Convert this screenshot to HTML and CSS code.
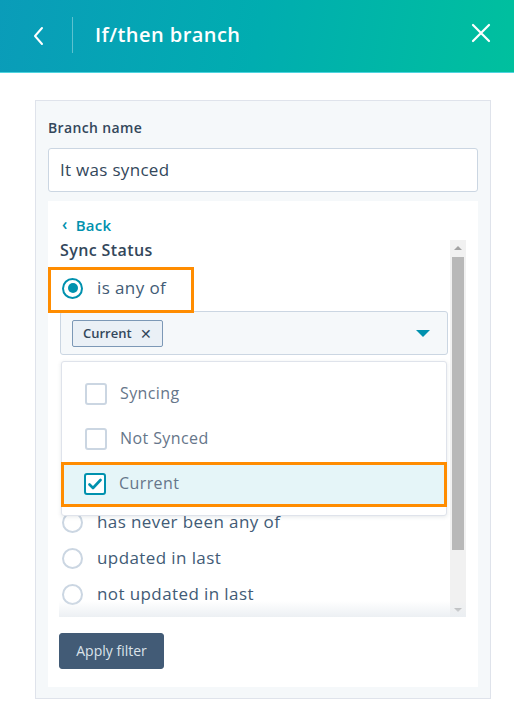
FILE: index.html
```html
<!DOCTYPE html>
<html>
<head>
<meta charset="utf-8">
<link rel="stylesheet" href="styles.css">
</head>
<body>
<header class="topbar">
  <button class="icon-btn back-btn" aria-label="Back">
    <svg width="12" height="20" viewBox="0 0 12 20"><path d="M10 2 L3 10 L10 18" fill="none" stroke="#fff" stroke-width="2" stroke-linecap="round" stroke-linejoin="round"/></svg>
  </button>
  <span class="divider"></span>
  <h1 class="title">If/then branch</h1>
  <button class="icon-btn close-btn" aria-label="Close">
    <svg width="20" height="20" viewBox="0 0 20 20"><path d="M2 2 L18 18 M18 2 L2 18" fill="none" stroke="#fff" stroke-width="2.2" stroke-linecap="round"/></svg>
  </button>
</header>

<main class="content">
  <section class="panel">
    <label class="field-label">Branch name</label>
    <div class="text-input">It was synced</div>

    <div class="filter-card">
      <a class="back-link"><span class="chev">‹</span>Back</a>
      <div class="scroll-box">
        <div class="scroll-content">
          <div class="prop-title">Sync Status</div>
          <div class="radio-row selected annotated">
            <span class="radio on"></span><span class="radio-label">is any of</span>
          </div>
          <div class="select">
            <span class="tag">Current <span class="tag-x">✕</span></span>
            <span class="caret"></span>
          </div>
          <div class="radio-row covered"><span class="radio"></span><span class="radio-label">is none of</span></div>
          <div class="radio-row covered"><span class="radio"></span><span class="radio-label">is known</span></div>
          <div class="radio-row covered"><span class="radio"></span><span class="radio-label">is unknown</span></div>
          <div class="radio-row covered"><span class="radio"></span><span class="radio-label">has ever been any of</span></div>
          <div class="radio-row"><span class="radio"></span><span class="radio-label">has never been any of</span></div>
          <div class="radio-row"><span class="radio"></span><span class="radio-label">updated in last</span></div>
          <div class="radio-row"><span class="radio"></span><span class="radio-label">not updated in last</span></div>

          <ul class="dropdown">
            <li class="option"><span class="check"></span>Syncing</li>
            <li class="option"><span class="check"></span>Not Synced</li>
            <li class="option active"><span class="check on">
              <svg width="14" height="12" viewBox="0 0 14 12"><path d="M1.5 6.5 L5 10 L12.5 2" fill="none" stroke="#0091ae" stroke-width="2.6" stroke-linecap="round" stroke-linejoin="round"/></svg>
            </span>Current</li>
          </ul>
        </div>
        <div class="scrollbar">
          <span class="arrow up"></span>
          <span class="thumb"></span>
          <span class="arrow down"></span>
        </div>
        <div class="fade"></div>
      </div>
      <button class="apply-btn">Apply filter</button>
    </div>
  </section>
</main>
</body>
</html>
```

FILE: styles.css
```css
* { box-sizing: border-box; }
html, body { margin: 0; padding: 0; }
body {
  font-family: "Open Sans", Lato, "Liberation Sans", sans-serif;
  color: #33475b;
  background: #fff;
  width: 514px;
  height: 707px;
  overflow: hidden;
}

.topbar {
  height: 73px;
  display: flex;
  align-items: center;
  background: linear-gradient(100deg, #0a9cb9 0%, #00adb0 50%, #00c09e 100%);
  border-bottom: 1px solid #4ed4df;
  padding: 0 0 0 28px;
}
.icon-btn {
  background: none;
  border: 0;
  padding: 0;
  display: flex;
  align-items: center;
  justify-content: center;
  cursor: pointer;
}
.back-btn { width: 20px; height: 30px; margin-top: -1px; }
.divider {
  width: 1px;
  height: 36px;
  background: rgba(255,255,255,0.35);
  margin-left: 24px;
  margin-top: -2px;
}
.title {
  margin: 0 0 0 22px;
  font-size: 20px;
  font-weight: 600;
  color: #fff;
  letter-spacing: 0.45px;
  flex: 1;
  margin-top: -4px;
}
.close-btn { width: 24px; height: 24px; margin-right: 21px; margin-top: -6px; }

.content { padding: 27px 0 0 35px; }
.panel {
  width: 456px;
  background: #f5f8fa;
  border: 1px solid #dfe3eb;
  padding: 18px 12px 11px 12px;
  display: flex;
  flex-direction: column;
}
.field-label {
  font-size: 14px;
  line-height: 18px;
  font-weight: 600;
  color: #33475b;
  letter-spacing: 0.35px;
}
.text-input {
  margin-top: 11px;
  height: 44px;
  width: 430px;
  background: #fff;
  border: 1px solid #cbd6e2;
  border-radius: 3px;
  padding: 0 11px 2px;
  display: flex;
  align-items: center;
  font-size: 17px;
  letter-spacing: 0.3px;
  color: #33475b;
}

.filter-card {
  margin-top: 9px;
  background: #fff;
  padding: 15px 12px 18px 11px;
  display: flex;
  flex-direction: column;
  align-items: flex-start;
}
.back-link {
  font-size: 15px;
  line-height: 18px;
  font-weight: 600;
  color: #0091ae;
  margin-left: 3px;
  display: flex;
  align-items: center;
  letter-spacing: 0.3px;
}
.chev { font-size: 16px; margin-right: 8px; margin-top: -2px; }

.scroll-box {
  margin-top: 6px;
  position: relative;
  width: 407px;
  height: 377px;
  display: flex;
}
.scroll-content {
  position: relative;
  flex: 1;
  padding-left: 1px;
}
.prop-title {
  font-size: 16px;
  line-height: 20px;
  font-weight: 600;
  color: #33475b;
  margin-bottom: 10px;
  letter-spacing: 0.4px;
}
.radio-row {
  height: 36px;
  display: flex;
  align-items: center;
  padding-left: 2px;
  position: relative;
}
.radio-row.covered { visibility: hidden; }
.radio {
  width: 21px;
  height: 21px;
  border-radius: 50%;
  border: 2px solid #cbd6e2;
  background: #fff;
  flex: none;
  display: flex;
  align-items: center;
  justify-content: center;
}
.radio.on { border-color: #0091ae; }
.radio.on::after {
  content: "";
  width: 10px;
  height: 10px;
  border-radius: 50%;
  background: #0091ae;
}
.radio-label {
  margin-left: 14px;
  font-size: 17px;
  letter-spacing: 0.4px;
  color: #425b76;
  margin-top: -1px;
}
.annotated::before {
  content: "";
  position: absolute;
  left: -12px;
  top: -3px;
  width: 140px;
  height: 40px;
  border: 3px solid #ff8c00;
}

.select {
  margin-top: 5px;
  margin-bottom: 5px;
  height: 44px;
  width: 388px;
  background: #f5f8fa;
  border: 1px solid #cbd6e2;
  border-radius: 3px;
  display: flex;
  align-items: center;
  padding: 0 17px 0 11px;
}
.tag {
  height: 27px;
  display: flex;
  align-items: center;
  background: #eaf0f6;
  border: 1px solid #7c98b6;
  border-radius: 2px;
  padding: 0 10px 0 10px;
  font-size: 13px;
  font-weight: 600;
  color: #33475b;
}
.tag-x { font-weight: 400; font-size: 14px; margin-left: 8px; color: #33475b; }
.caret {
  margin-left: auto;
  width: 0;
  height: 0;
  border-left: 7px solid transparent;
  border-right: 7px solid transparent;
  border-top: 7px solid #0091ae;
}

.dropdown {
  position: absolute;
  left: 2px;
  top: 121px;
  width: 386px;
  margin: 0;
  padding: 10px 0 8px 0;
  list-style: none;
  background: #fff;
  border: 1px solid #dfe3eb;
  border-radius: 3px;
  box-shadow: 0 1px 4px rgba(45,62,80,0.12);
}
.option {
  height: 45px;
  display: flex;
  align-items: center;
  padding-left: 23px;
  font-size: 16px;
  letter-spacing: 0.4px;
  color: #66768a;
  padding-bottom: 4px;
}
.option.active {
  background: #e5f5f8;
  border: 3px solid #ff8c00;
  padding-left: 20px;
  margin: 0 -1px;
}
.check {
  width: 22px;
  height: 22px;
  border: 2px solid #cbd6e2;
  border-radius: 3px;
  margin-right: 13px;
  background: #fff;
  display: flex;
  align-items: center;
  justify-content: center;
  margin-top: 3px;
}
.check.on { border-color: #0091ae; }

.scrollbar {
  width: 16px;
  margin-left: 2px;
  background: #f1f1f1;
  display: flex;
  flex-direction: column;
  align-items: center;
}
.arrow { width: 0; height: 0; border-left: 4px solid transparent; border-right: 4px solid transparent; }
.arrow.up { border-bottom: 4px solid #a3a3a3; margin-top: 6px; }
.arrow.down { border-top: 4px solid #a3a3a3; margin-bottom: 5px; margin-top: auto; }
.thumb { width: 12px; height: 293px; background: #b8b8b8; margin-top: 7px; }

.fade {
  position: absolute;
  left: 0;
  right: 0;
  bottom: 0;
  height: 16px;
  background: linear-gradient(to bottom, rgba(238,241,244,0), rgba(234,238,242,0.9));
  pointer-events: none;
}

.apply-btn {
  margin-top: 16px;
  width: 105px;
  height: 36px;
  background: #425b76;
  border: 1px solid #425b76;
  border-radius: 3px;
  color: #dbe3ea;
  font-family: "Open Sans", Lato, "Liberation Sans", sans-serif;
  font-size: 14px;
  cursor: pointer;
  padding-bottom: 2px;
}
```
